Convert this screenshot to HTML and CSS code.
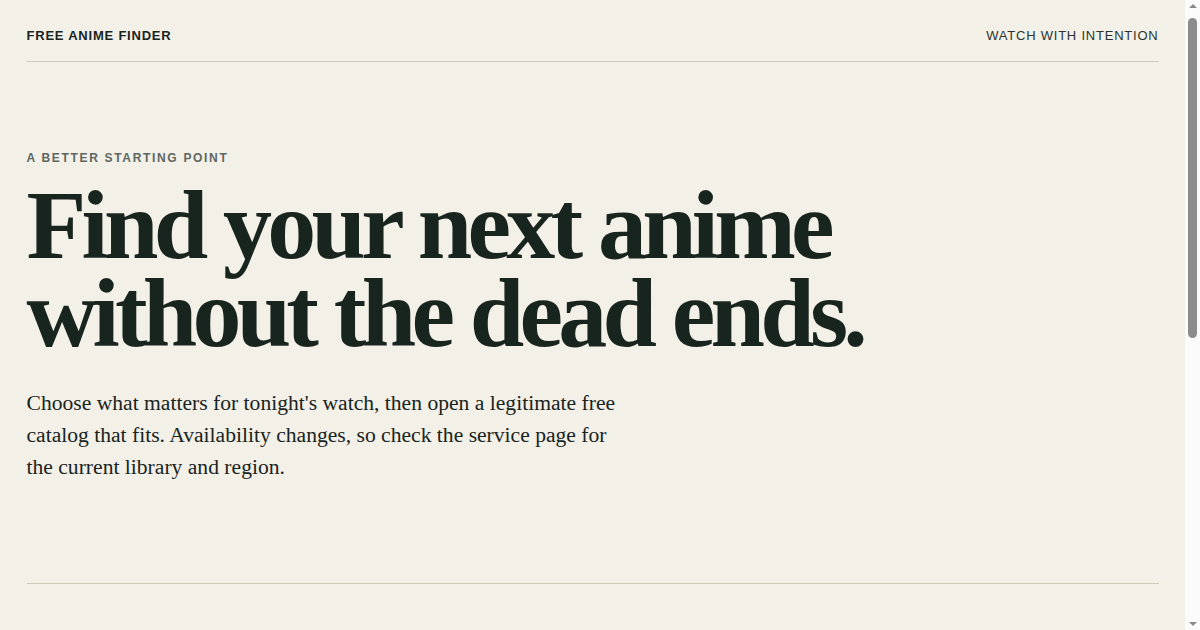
FILE: index.html
```html
<!DOCTYPE html>
<html lang="en">
<head>
<meta charset="utf-8">
<title>Free Anime Finder</title>
<link rel="stylesheet" href="styles.css">
</head>
<body>
<div class="page">
  <header class="site-header">
    <div class="brand">FREE ANIME FINDER</div>
    <div class="tagline">WATCH WITH INTENTION</div>
  </header>
  <section class="hero">
    <p class="eyebrow">A BETTER STARTING POINT</p>
    <h1 class="headline">Find your next anime<br>without the dead ends.</h1>
    <p class="lede">Choose what matters for tonight's watch, then open a legitimate free catalog that fits. Availability changes, so check the service page for the current library and region.</p>
  </section>
  <section class="finder">
    <div class="finder-head">
      <span class="finder-note">Takes about a minute</span>
    </div>
    <div class="finder-body">
      <div class="choice">Something cozy</div>
      <div class="choice">Big action</div>
      <div class="choice">Short series</div>
      <div class="choice">Classic films</div>
    </div>
  </section>
</div>
<div class="scrollbar" aria-hidden="true">
  <div class="arrow arrow-up"></div>
  <div class="track"><div class="thumb"></div></div>
  <div class="arrow arrow-down"></div>
</div>
</body>
</html>
```
FILE: styles.css
```css
* { box-sizing: border-box; }
html, body { margin: 0; padding: 0; height: 100%; overflow: hidden; }
body {
  display: flex;
  background: #f3f0e8;
  color: #18241e;
  font-family: "Liberation Serif", "Times New Roman", serif;
}
.page {
  flex: 1;
  height: 100vh;
  overflow-y: auto;
  padding: 0 26.5px;
}
.site-header {
  display: flex;
  justify-content: space-between;
  align-items: center;
  height: 62px;
  padding-top: 9px;
  border-bottom: 1px solid #cfcbbb;
  font-family: "Liberation Sans", Arial, sans-serif;
  font-size: 13px;
  letter-spacing: 0.06em;
}
.brand { font-weight: 700; color: #18241e; }
.tagline { color: #2a332e; }
.hero {
  padding: 89px 0 100px;
  border-bottom: 1px solid #cfcbbb;
}
.eyebrow {
  margin: 0;
  font-family: "Liberation Sans", Arial, sans-serif;
  font-weight: 700;
  font-size: 12px;
  letter-spacing: 0.14em;
  color: #5d675f;
  line-height: 14px;
}
.headline {
  margin: 16px 0 0;
  font-family: "Liberation Serif", "Times New Roman", serif;
  font-weight: 700;
  font-size: 98px;
  line-height: 88px;
  letter-spacing: -0.049em;
  color: #18241e;
}
.lede {
  margin: 30px 0 0;
  max-width: 600px;
  font-size: 21.6px;
  line-height: 32px;
  color: #18241e;
}
.finder {
  padding: 50px 0 0;
  min-height: 606px;
}
.finder-head {
  display: flex;
  justify-content: flex-end;
}
.finder-note {
  font-family: "Liberation Sans", Arial, sans-serif;
  font-size: 13px;
  color: #2a332e;
}
.finder-body {
  display: grid;
  grid-template-columns: repeat(4, 1fr);
  gap: 16px;
  margin-top: 32px;
}
.choice {
  border: 1px solid #cfcbbb;
  padding: 60px 20px;
  font-size: 22px;
}
.scrollbar {
  flex: 0 0 15px;
  width: 15px;
  height: 100vh;
  background: #fbfbfb;
  display: flex;
  flex-direction: column;
  align-items: center;
}
.arrow {
  flex: 0 0 12px;
  display: flex;
  align-items: center;
  justify-content: center;
}
.arrow-up::before,
.arrow-down::before {
  content: "";
  width: 0;
  height: 0;
  border-left: 4.5px solid transparent;
  border-right: 4.5px solid transparent;
}
.arrow-up::before { border-bottom: 4px solid #8a8a8a; }
.arrow-down::before { border-top: 4px solid #8a8a8a; }
.track {
  flex: 1;
  width: 100%;
  padding: 6px 3px 0;
}
.thumb {
  width: 9px;
  height: 320px;
  border-radius: 5px;
  background: #8c8c8c;
}
```
